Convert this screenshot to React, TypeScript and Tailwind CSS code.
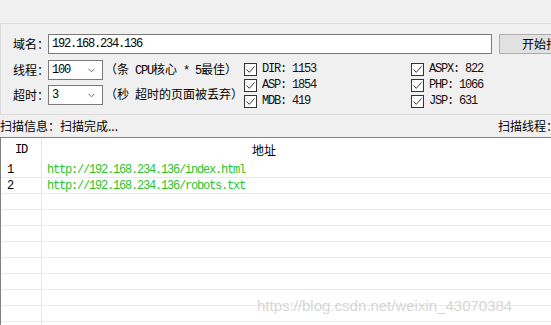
import React from 'react';

const MONO = "font-['Liberation_Mono',monospace] text-[12px] tracking-[-1.2px]";
const CJK = "font-['Noto_Sans_CJK_SC',sans-serif] text-[12px]";

function Check({ label }: { label: string }) {
  return (
    <div className="flex items-center h-4 gap-[5px]">
      <span className="w-[13px] h-[13px] shrink-0 border border-[#333333] bg-white flex items-center justify-center">
        <svg width="11" height="11" viewBox="0 0 11 11">
          <path d="M1.5 5.5 L4.3 8.3 L9.5 2.5" fill="none" stroke="#333333" strokeWidth="1" />
        </svg>
      </span>
      <span className={`${MONO} text-[#111111] whitespace-nowrap`}>{label}</span>
    </div>
  );
}

function Combo({ value }: { value: string }) {
  return (
    <div className="w-[55px] h-[20px] shrink-0 border border-[#7a7a7a] bg-white flex items-center justify-between pl-[3px] pr-[7px]">
      <span className={`${MONO} text-black`}>{value}</span>
      <svg width="7" height="5" viewBox="0 0 7 5">
        <path d="M0.5 0.8 L3.5 3.8 L6.5 0.8" fill="none" stroke="#6d6d6d" strokeWidth="1" />
      </svg>
    </div>
  );
}

const rows = [
  { id: '1', url: 'http://192.168.234.136/index.html' },
  { id: '2', url: 'http://192.168.234.136/robots.txt' },
  ...Array.from({ length: 9 }, () => ({ id: '', url: '' })),
];

export default function App() {
  return (
    <div className={`relative w-[551px] h-[325px] overflow-hidden bg-[#f0f0f0] flex flex-col text-black leading-[16px] ${CJK}`}>
      {/* 顶部空白 */}
      <div className="h-[23px] shrink-0" />

      {/* 参数区 */}
      <div className="h-[92px] shrink-0 border-t border-b border-l border-[#dcdcdc] pl-[12px] pt-[10px]">
        <div className="flex items-center">
          <span className="w-[35px] shrink-0 whitespace-nowrap">域名：</span>
          <div className="w-[444px] h-[20px] shrink-0 border border-[#7a7a7a] bg-white flex items-center pl-[3px]">
            <span className={MONO}>192.168.234.136</span>
          </div>
          <div className="ml-[7px] w-[93px] h-[20px] shrink-0 border border-[#adadad] bg-[#e1e1e1] flex items-center pl-[22px] whitespace-nowrap">
            开始扫描
          </div>
        </div>

        <div className="flex mt-[6px]">
          <div className="w-[231px] shrink-0 flex flex-col gap-[5px]">
            <div className="flex items-center h-[20px]">
              <span className="w-[35px] shrink-0 whitespace-nowrap">线程：</span>
              <Combo value="100" />
              <span className="ml-[2px] whitespace-nowrap">
                （条<span className={`${MONO} whitespace-pre`}> CPU</span>核心<span className={`${MONO} whitespace-pre`}> * 5</span>最佳）
              </span>
            </div>
            <div className="flex items-center h-[20px]">
              <span className="w-[35px] shrink-0 whitespace-nowrap">超时：</span>
              <Combo value="3" />
              <span className="ml-[2px] whitespace-nowrap">
                （秒<span className={`${MONO} whitespace-pre`}> </span>超时的页面被丢弃）
              </span>
            </div>
          </div>
          <div className="w-[167px] shrink-0 pt-[1px]">
            <Check label="DIR: 1153" />
            <Check label="ASP: 1854" />
            <Check label="MDB: 419" />
          </div>
          <div className="shrink-0 pt-[1px]">
            <Check label="ASPX: 822" />
            <Check label="PHP: 1066" />
            <Check label="JSP: 631" />
          </div>
        </div>
      </div>

      {/* 状态栏 */}
      <div className="h-[22px] shrink-0 flex items-center justify-between">
        <span className="whitespace-nowrap">扫描信息：扫描完成...</span>
        <span className="w-[53px] shrink-0 overflow-hidden whitespace-nowrap">扫描线程：</span>
      </div>

      {/* 结果列表 */}
      <div className="flex-1 bg-white border-t border-l border-[#808080] overflow-hidden">
        <div className="flex h-[24px] items-center">
          <div className="w-[41px] h-full shrink-0 border-r border-[#e5e5e5] flex items-center justify-center">
            <span className={MONO}>ID</span>
          </div>
          <div className="w-[444px] shrink-0 text-center">地址</div>
        </div>
        {rows.map((r, i) => (
          <div key={i} className="flex h-[16px] border-b border-[#ebebeb]">
            <div className="w-[41px] h-full shrink-0 border-r border-[#e5e5e5] pl-[6px] flex items-center">
              <span className={MONO}>{r.id}</span>
            </div>
            <div className="pl-[5px] flex items-center">
              <span className={`${MONO} text-[#2ac42a] whitespace-nowrap`}>{r.url}</span>
            </div>
          </div>
        ))}
      </div>

      {/* 水印 */}
      <div className="absolute left-[257px] top-[297px] font-['Liberation_Sans',sans-serif] text-[15px] leading-[17px] text-[#d6d6d6] whitespace-nowrap">
        https://blog.csdn.net/weixin_43070384
      </div>
    </div>
  );
}
